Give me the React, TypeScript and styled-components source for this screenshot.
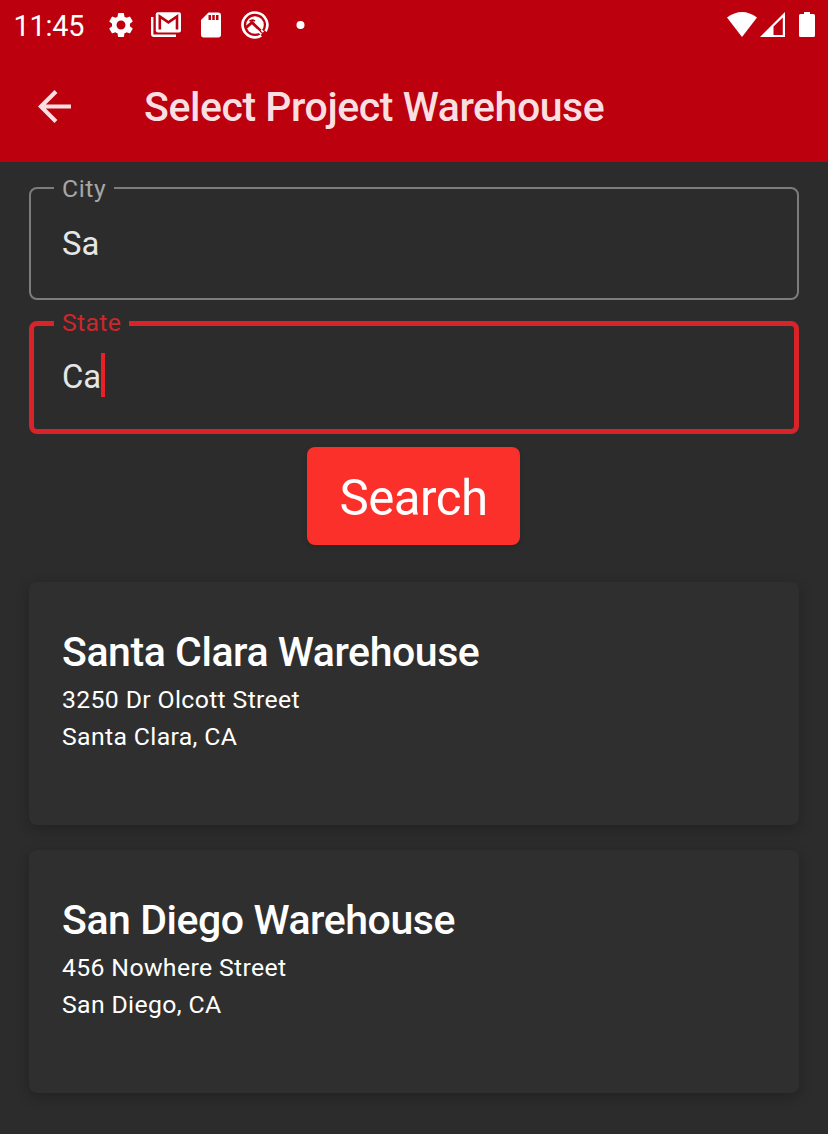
import React from 'react';
import styled, { createGlobalStyle } from 'styled-components';
import { MdSettings, MdSdStorage } from 'react-icons/md';

const GlobalStyle = createGlobalStyle`
  * { box-sizing: border-box; }
  body {
    margin: 0;
    background: #2c2c2c;
    font-family: Roboto, "Liberation Sans", sans-serif;
  }
`;

const Screen = styled.div`
  width: 828px;
  height: 1134px;
  overflow: hidden;
  background: #2c2c2c;
`;

const Header = styled.header`
  height: 162px;
  background: #bc000d;
  color: #fff;
`;

const StatusBar = styled.div`
  display: flex;
  align-items: center;
  height: 49px;
  padding: 0 12px 0 13.5px;
`;

const Clock = styled.span`
  width: 92.5px;
  font-size: 28.8px;
  line-height: 34px;
  letter-spacing: -0.2px;
  padding-top: 3px;
`;

const Notifications = styled.div`
  display: flex;
  align-items: center;
  flex: 1;
  gap: 15px;
  svg { flex: none; }
`;

const SystemIcons = styled.div`
  display: flex;
  align-items: center;
`;

const AppBar = styled.div`
  display: flex;
  align-items: center;
  height: 113px;
  padding-left: 38px;
  color: #f9dfe1;
`;

const BackButton = styled.a`
  display: flex;
  width: 106px;
  margin-top: 1px;
`;

const Title = styled.h1`
  margin: 2px 0 0;
  font-size: 41px;
  font-weight: 500;
  line-height: 48px;
  letter-spacing: -0.44px;
  white-space: nowrap;
`;

const Content = styled.main`
  display: flex;
  flex-direction: column;
  padding: 12px 29px 0;
`;

const Field = styled.fieldset<{ $focused?: boolean }>`
  height: ${p => (p.$focused ? 125 : 126)}px;
  margin: 0 0 ${p => (p.$focused ? 13 : 9)}px;
  padding: ${p => (p.$focused ? 20 : 22)}px 33px 0 ${p => (p.$focused ? 28 : 31)}px;
  border: ${p => (p.$focused ? '5px solid #d82329' : '2px solid #7c7c7c')};
  border-radius: 8px;
`;

const Label = styled.legend<{ $focused?: boolean }>`
  height: 28px;
  margin-left: -8px;
  padding: ${p => (p.$focused ? 0 : 1)}px 8px 0;
  font-size: 24.8px;
  line-height: 28px;
  letter-spacing: ${p => (p.$focused ? 0.3 : 0.6)}px;
  color: ${p => (p.$focused ? '#cd262b' : '#a6a6a6')};
`;

const Value = styled.div`
  display: flex;
  align-items: center;
  height: 40px;
  font-size: 32.8px;
  line-height: 40px;
  color: #e6e6e6;
`;

const Caret = styled.span`
  width: 4px;
  height: 44px;
  margin-top: -4px;
  background: #ec1f27;
`;

const SearchButton = styled.button`
  align-self: center;
  width: 213px;
  height: 98px;
  margin: 0 1px 37px 0;
  padding: 4px 0 0;
  border: 0;
  border-radius: 8px;
  background: #fb302b;
  box-shadow: 0 2px 5px rgba(0, 0, 0, 0.16);
  color: #fff;
  font-family: inherit;
  font-size: 49.2px;
  line-height: 58px;
  letter-spacing: -0.5px;
`;

const Card = styled.article`
  height: 243px;
  margin-bottom: 25px;
  padding: 46px 33px 0;
  border-radius: 8px;
  background: #2f2f2f;
  box-shadow: 0 4px 14px rgba(0, 0, 0, 0.24);
  color: #fff;
`;

const CardTitle = styled.h2`
  margin: 0 0 5px;
  font-size: 41px;
  font-weight: 500;
  line-height: 48px;
  letter-spacing: -0.44px;
`;

const Address = styled.p`
  margin: 0;
  font-size: 24.8px;
  line-height: 37px;
  letter-spacing: 0.35px;
`;

const MailStackIcon = () => (
  <svg width="30" height="26" viewBox="0 0 30 26" fill="none" stroke="#fff">
    <path d="M1.2 5V22Q1.2 23.8 3 23.8H25" strokeWidth="2.4" />
    <rect x="4.8" y="0.2" width="25.2" height="20.4" rx="2" fill="#fff" stroke="none" />
    <path d="M8.8 17.6V4.4L17.4 10.4L26 4.4V17.6" stroke="#bc000d" strokeWidth="2.6" />
  </svg>
);

const SearchBadgeIcon = () => (
  <svg width="28" height="28" viewBox="0 0 28 28" fill="none">
    <path d="M20.2 24.6A12.4 12.4 0 1 1 24.6 20.2" stroke="#fff" strokeWidth="2.7" />
    <circle cx="14" cy="14" r="8.8" fill="#fff" />
    <path d="M5 16.6L11 11.4L23.5 23.6" stroke="#bc000d" strokeWidth="2.8" />
    <path d="M8.5 10.4Q11 7.8 14 10.2" stroke="#bc000d" strokeWidth="1.6" />
    <path d="M15.6 18.8L20.4 23.4" stroke="#fff" strokeWidth="1.8" />
    <path d="M20.2 19.2L22.4 21.2" stroke="#fff" strokeWidth="1.8" />
  </svg>
);

const App = () => (
  <>
    <GlobalStyle />
    <Screen>
      <Header>
        <StatusBar>
          <Clock>11:45</Clock>
          <Notifications>
            <MdSettings size={30} />
            <MailStackIcon />
            <MdSdStorage size={30} />
            <SearchBadgeIcon />
            <svg width="32" height="8" viewBox="0 0 32 8">
              <circle cx="16.5" cy="4" r="4" fill="#fff" />
            </svg>
          </Notifications>
          <SystemIcons>
            <svg width="89" height="26" viewBox="0 0 89 26" fill="#fff">
              <path d="M0 5.5Q15 -5.5 30 5.5L15 25Z" />
              <path fillRule="evenodd" d="M33 25L58 0V25ZM46.5 14.5V23H55.8V5.5Z" />
              <path d="M77 0H83V2H86.5Q88 2 88 3.5V23.5Q88 25 86.5 25H73.5Q72 25 72 23.5V3.5Q72 2 73.5 2H77Z" />
            </svg>
          </SystemIcons>
        </StatusBar>
        <AppBar>
          <BackButton aria-label="Back">
            <svg width="33" height="33" viewBox="4 4 16 16" fill="currentColor">
              <path d="M20 11H7.83l5.59-5.59L12 4l-8 8 8 8 1.41-1.41L7.83 13H20v-2z" />
            </svg>
          </BackButton>
          <Title>Select Project Warehouse</Title>
        </AppBar>
      </Header>
      <Content>
        <Field>
          <Label>City</Label>
          <Value>Sa</Value>
        </Field>
        <Field $focused>
          <Label $focused>State</Label>
          <Value>Ca<Caret /></Value>
        </Field>
        <SearchButton>Search</SearchButton>
        <Card>
          <CardTitle>Santa Clara Warehouse</CardTitle>
          <Address>3250 Dr Olcott Street</Address>
          <Address>Santa Clara, CA</Address>
        </Card>
        <Card>
          <CardTitle>San Diego Warehouse</CardTitle>
          <Address>456 Nowhere Street</Address>
          <Address>San Diego, CA</Address>
        </Card>
      </Content>
    </Screen>
  </>
);

export default App;
